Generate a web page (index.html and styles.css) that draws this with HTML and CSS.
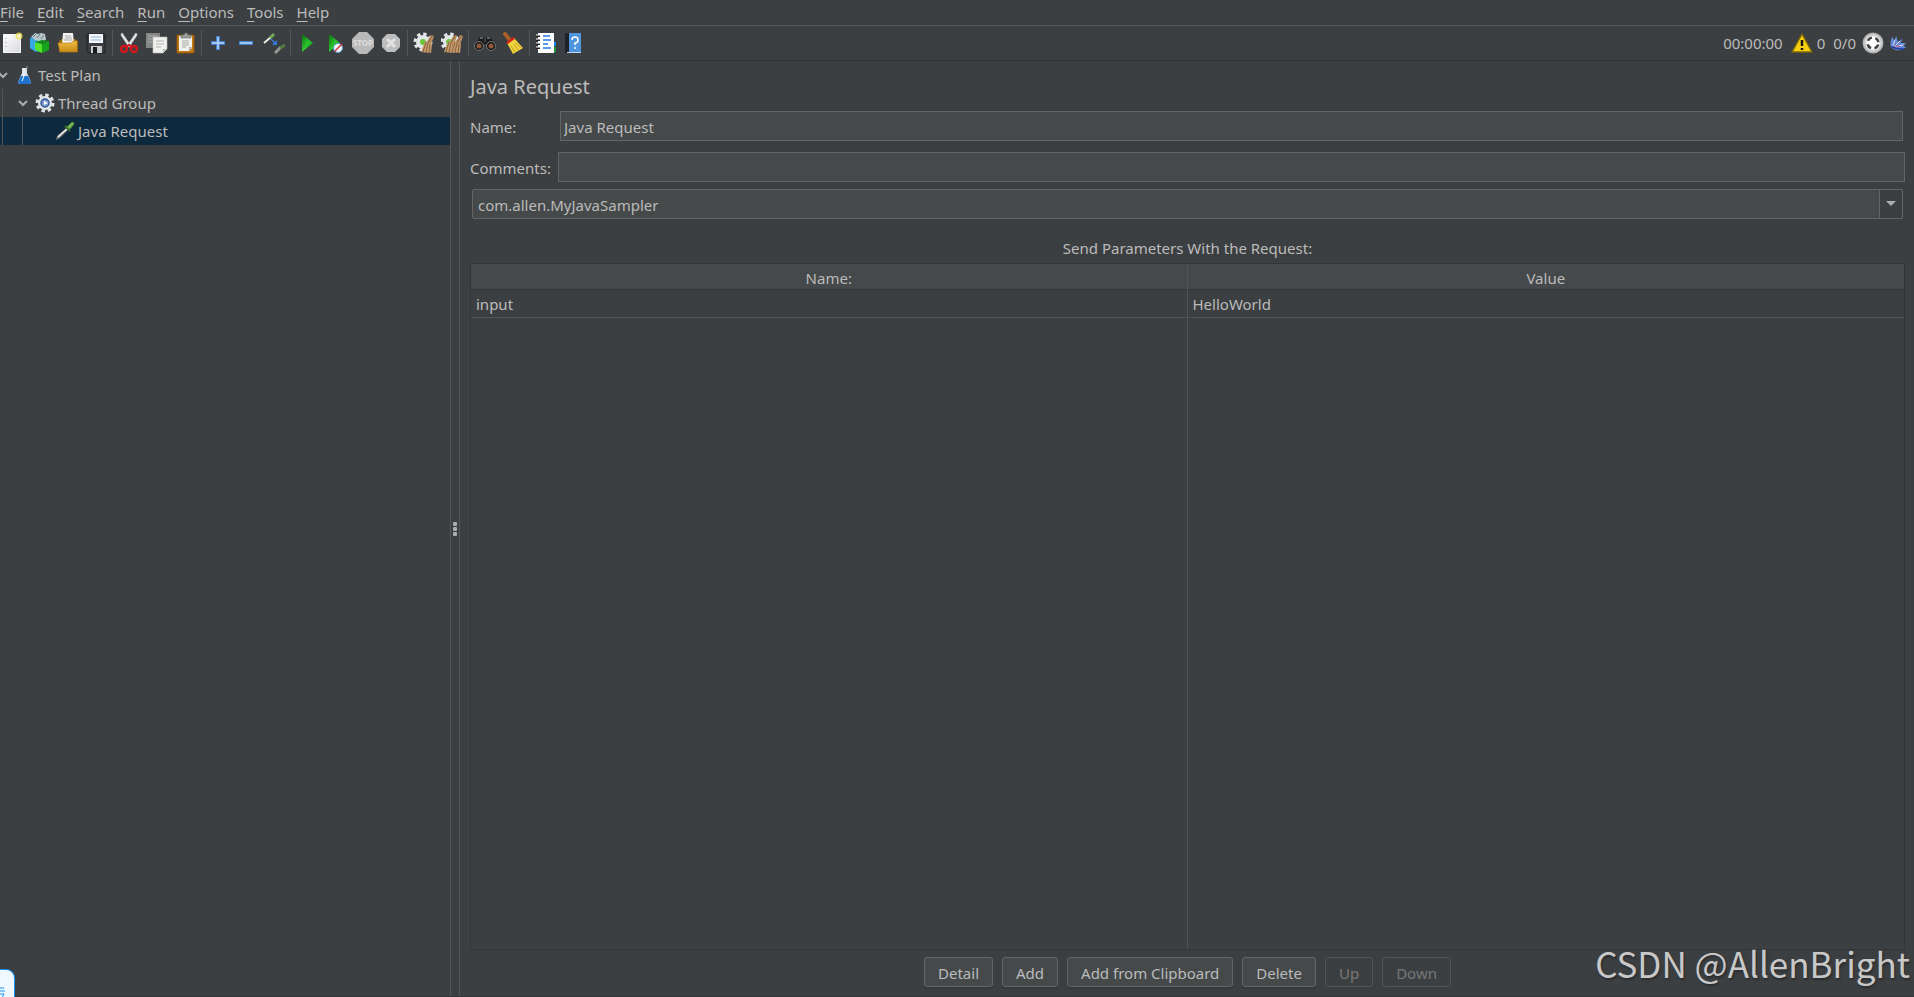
FILE: index.html
```html
<!DOCTYPE html>
<html lang="en">
<head>
  <meta charset="UTF-8">
  <meta name="viewport" content="width=device-width, initial-scale=1">
  <title>Java Request</title>
  <link rel="stylesheet" href="styles.css">
</head>
<body>

<svg class="defs" aria-hidden="true">
  <defs>
    <linearGradient id="green" x1="0" y1="0" x2="1" y2="1">
      <stop offset="0" stop-color="#0b6b0b"/>
      <stop offset="0.5" stop-color="#2cc42c"/>
      <stop offset="1" stop-color="#0a8a0a"/>
    </linearGradient>
    <linearGradient id="gold" x1="0" y1="0" x2="0" y2="1">
      <stop offset="0" stop-color="#f0bd4a"/>
      <stop offset="1" stop-color="#c68a14"/>
    </linearGradient>
    <linearGradient id="paper" x1="0" y1="0" x2="1" y2="1">
      <stop offset="0" stop-color="#ffffff"/>
      <stop offset="1" stop-color="#d9d9dd"/>
    </linearGradient>
    <radialGradient id="ball">
      <stop offset="0.5" stop-color="#ffffff"/>
      <stop offset="1" stop-color="#a5a5a5"/>
    </radialGradient>
    <g id="gear">
      <circle cx="11" cy="11" r="7" fill="#e4e7ea"/>
      <circle cx="11" cy="11" r="8" fill="none" stroke="#e4e7ea" stroke-width="3" stroke-dasharray="3.4 2.88"/>
    </g>
    <g id="pipette">
      <path d="M2 20l1-4 9-8 2 2-8 8z" fill="#777c78"/>
      <path d="M4 17l9-8" stroke="#f4f4f4" stroke-width="1.5"/>
      <path d="M11 6l5 5" stroke="#3d7030" stroke-width="2"/>
      <path d="M13 7l4-4q3-2 3 1l-4 5z" fill="#79b65a" stroke="#4d8a38"/>
    </g>
    <g id="broom">
      <path d="M17 3l-5 8 5 2 3-9z" fill="#b98d63"/>
      <path d="M11 9L7 20l10 1 1-9z" fill="#c49a70"/>
      <path d="M12 10L9 20M14 11l-2 9M16 12l-1 9M18 4l-4 7" stroke="#8b6238"/>
    </g>
  </defs>
</svg>

<nav class="menubar">
  <a href="#"><u>F</u>ile</a>
  <a href="#"><u>E</u>dit</a>
  <a href="#"><u>S</u>earch</a>
  <a href="#"><u>R</u>un</a>
  <a href="#"><u>O</u>ptions</a>
  <a href="#"><u>T</u>ools</a>
  <a href="#"><u>H</u>elp</a>
</nav>

<div class="toolbar">
  <button aria-label="New">
    <svg viewBox="0 0 22 22">
      <rect x="2.5" y="2.5" width="17" height="18" fill="url(#paper)" stroke="#f5f5f5"/>
      <path d="M5 6v1M5 10v1M5 14v1" stroke="#999"/>
      <circle cx="18" cy="4" r="3.5" fill="#f2e45c" opacity="0.8"/>
      <circle cx="18" cy="4" r="1.5" fill="#fffde0"/>
    </svg>
  </button>
  <button aria-label="Templates">
    <svg viewBox="0 0 22 22">
      <path d="M1 6l6-2 5 3v12l-5 1-6-4z" fill="#1687c9"/>
      <path d="M1 6l6 2v12l-6-4z" fill="#35a8e6"/>
      <path d="M2 5l4-4 3 1 3-1 4 1 1 6-5 2-6-2z" fill="#b7c8cb"/>
      <path d="M4 5l3-3M8 6l3-4M12 7l3-4" stroke="#65797e"/>
      <path d="M6 10l7 2v9l-7-3z" fill="#57df2d"/>
      <path d="M13 12l7-3v9l-7 3z" fill="#17a41c"/>
      <path d="M6 10l7-2 7 1-7 3z" fill="#138b1a"/>
    </svg>
  </button>
  <button aria-label="Open">
    <svg viewBox="0 0 22 22">
      <path d="M2 9l3-2h13l3 2v11H2z" fill="#9a6a10"/>
      <path d="M6 1h10l1 11H5z" fill="#f2f2f2"/>
      <path d="M8 4h6M8 6h7M7 8h8" stroke="#aaa"/>
      <path d="M1 11h13l2-2h4v11H3z" fill="url(#gold)" stroke="#b57c10" stroke-width="0.6"/>
    </svg>
  </button>
  <button aria-label="Save">
    <svg viewBox="0 0 22 22">
      <path d="M2 2h18v19H4l-2-2z" fill="#3b3d42" stroke="#202124"/>
      <path d="M4 2h14v9H4z" fill="#f1f6fb"/>
      <path d="M6 5h10M6 8h10" stroke="#94b5d5"/>
      <path d="M6 14h11v7H6z" fill="#c9cbcf"/>
      <path d="M8 15h4v6H8z" fill="#1b1c1e"/>
    </svg>
  </button>
  <span class="sep"></span>
  <button aria-label="Cut">
    <svg viewBox="0 0 22 22">
      <path d="M4 1l9 13-2 1L3 3zM18 1l1 2-8 12-2-1z" fill="#e9eaeb" stroke="#c8c8c8"/>
      <ellipse cx="6" cy="17" rx="3" ry="3" fill="none" stroke="#d3161c" stroke-width="2.4"/>
      <ellipse cx="16" cy="17" rx="3" ry="3" fill="none" stroke="#d3161c" stroke-width="2.4"/>
      <path d="M8 15l3-2 3 2" fill="none" stroke="#d3161c" stroke-width="2"/>
    </svg>
  </button>
  <button aria-label="Copy">
    <svg viewBox="0 0 22 22">
      <path d="M0 1h14v15H0z" fill="#858786"/>
      <path d="M2 4h9M2 7h8M2 10h5" stroke="#a9aaa9"/>
      <path d="M7 5h14v12l-4 4H7z" fill="#f0f0ee" stroke="#bcbcbc" stroke-width="0.6"/>
      <path d="M10 9h8M10 12h8M10 15h5" stroke="#b2b2b2"/>
      <path d="M21 17h-4v4z" fill="#bbb"/>
    </svg>
  </button>
  <button aria-label="Paste">
    <svg viewBox="0 0 22 22">
      <rect x="3" y="3" width="17" height="18" rx="1" fill="#c07a13" stroke="#905409"/>
      <path d="M5 4h13v12l-3 3H5z" fill="#f0f0ee"/>
      <path d="M8 9h7M8 11h7M8 13h7M8 15h4" stroke="#aaa"/>
      <path d="M7 3h3l1-2h2l1 2h3v3H7z" fill="#9b9f9b" stroke="#60645f" stroke-width="0.6"/>
      <path d="M18 15h-3v4z" fill="#aaa"/>
    </svg>
  </button>
  <span class="sep"></span>
  <button aria-label="Expand all">
    <svg viewBox="0 0 22 22"><path d="M11 4v14M4 11h14" stroke="#447fc8" stroke-width="4"/><path d="M11 5v12M5 11h12" stroke="#b9dcff" stroke-width="1.5"/></svg>
  </button>
  <button aria-label="Collapse all">
    <svg viewBox="0 0 22 22"><path d="M4 11h14" stroke="#447fc8" stroke-width="4"/><path d="M5 11h12" stroke="#b9dcff" stroke-width="1.5"/></svg>
  </button>
  <button aria-label="Toggle">
    <svg viewBox="0 0 22 22">
      <path d="M1 11l7-6" stroke="#eee" stroke-width="2"/>
      <path d="M7 6l4-4" stroke="#75aa58" stroke-width="3"/>
      <path d="M12 21l6-6" stroke="#929992" stroke-width="3"/>
      <path d="M17 16l5-3" stroke="#547c40" stroke-width="3"/>
      <path d="M8 7l5 5" stroke="#347be0" stroke-width="1.5"/>
      <path d="M14 8v5H9z" fill="#347be0"/>
    </svg>
  </button>
  <span class="sep"></span>
  <button aria-label="Start">
    <svg viewBox="0 0 22 22"><path d="M6 2l11 9-11 9z" fill="url(#green)"/></svg>
  </button>
  <button aria-label="Start no pauses">
    <svg viewBox="0 0 22 22">
      <path d="M5 2l11 9-11 9z" fill="url(#green)"/>
      <circle cx="14" cy="16" r="4.5" fill="#edf5ff" stroke="#5f9bd5"/>
      <path d="M11 19l7-7" stroke="#de3030" stroke-width="1.5"/>
    </svg>
  </button>
  <button aria-label="Stop">
    <svg viewBox="0 0 22 22">
      <path d="M7 0h8l7 7v8l-7 7H7l-7-7V7z" fill="#b9b9b9"/>
      <text x="11" y="14" class="stop-text">STOP</text>
    </svg>
  </button>
  <button aria-label="Shutdown">
    <svg viewBox="0 0 22 22">
      <path d="M7 2h8l5 5v8l-5 5H7l-5-5V7z" fill="#bebebe"/>
      <path d="M7 7l8 8M15 7l-8 8" stroke="#e2e2e2" stroke-width="3"/>
    </svg>
  </button>
  <span class="sep"></span>
  <button aria-label="Clear">
    <svg viewBox="0 0 22 22"><use href="#gear" transform="translate(-1 -1)"/><circle cx="10" cy="10" r="3" fill="#68c83b"/><use href="#broom" transform="translate(1 0)"/></svg>
  </button>
  <button aria-label="Clear all">
    <svg viewBox="0 0 22 22"><use href="#gear" transform="translate(-2 -1)"/><circle cx="8" cy="10" r="3" fill="#68c83b"/><use href="#broom" transform="translate(-4 0)"/><use href="#broom" transform="translate(2 0)"/></svg>
  </button>
  <span class="sep"></span>
  <button aria-label="Search">
    <svg viewBox="0 0 22 22">
      <path d="M2 11l4-6h4v5h2V5h4l4 6v5h-7v-4H9v4H2z" fill="#1a1b1c"/>
      <circle cx="5" cy="14" r="4.5" fill="#181818" stroke="#777"/>
      <circle cx="17" cy="14" r="4.5" fill="#181818" stroke="#777"/>
      <circle cx="5" cy="14" r="2.5" fill="#93583c"/>
      <circle cx="17" cy="14" r="2.5" fill="#93583c"/>
      <path d="M6 6h3M13 6h3" stroke="#aaa"/>
    </svg>
  </button>
  <button aria-label="Reset search">
    <svg viewBox="0 0 22 22">
      <path d="M3 2l4 5" stroke="#a65e28" stroke-width="4" stroke-linecap="round"/>
      <path d="M5 11l7-5 9 10-10 6z" fill="#efd13d"/>
      <path d="M9 14l4 6M12 12l4 6M14 11l5 5" stroke="#c9a41f"/>
      <path d="M5 11l7-5" stroke="#d3201b" stroke-width="2.5"/>
    </svg>
  </button>
  <span class="sep"></span>
  <button aria-label="Function helper">
    <svg viewBox="0 0 22 22">
      <path d="M17 10h4v4h-4z" fill="#1685e5"/><path d="M17 15h4v5h-4z" fill="#1b9c33"/>
      <path d="M3 1h16v20H3z" fill="#fff"/>
      <path d="M8 4h7M8 8h8M8 12h5M8 16h8" stroke="#207de4" stroke-width="1.5"/>
      <path d="M1 4h4M1 8h4M1 12h4M1 16h4" stroke="#222" stroke-width="2"/>
      <path d="M1 3h4M1 7h4M1 11h4M1 15h4" stroke="#fff"/>
    </svg>
  </button>
  <button aria-label="Help">
    <svg viewBox="0 0 22 22">
      <path d="M3 1h15v19H3z" fill="#5095e0"/>
      <path d="M2 1h4v20H2z" fill="#1d2128"/>
      <path d="M4 20h14v1H4z" fill="#bcd6ef"/>
      <path d="M9 8q0-3 3-3t3 3-3 3v2" fill="none" stroke="#fff" stroke-width="1.5"/>
      <circle cx="12" cy="16" r="1" fill="#fff"/>
    </svg>
  </button>

  <div class="status">
    <span class="time">00:00:00</span>
    <svg viewBox="0 0 22 22">
      <path d="M11 2l10 18H1z" fill="#f6cf12" stroke="#79670c" stroke-width="1.5" stroke-linejoin="round"/>
      <path d="M11 8v6M11 16v2" stroke="#171717" stroke-width="2.5"/>
    </svg>
    <span class="errors">0</span>
    <span class="threads">0/0</span>
    <svg viewBox="0 0 22 22">
      <circle cx="11" cy="11" r="10.5" fill="url(#ball)"/>
      <circle cx="11" cy="11" r="5.5" fill="none" stroke="#414141" stroke-width="2.5" stroke-dasharray="5 3.64" stroke-dashoffset="-1.8"/>
    </svg>
    <svg class="feather" viewBox="0 0 22 22">
      <path d="M3 15Q2 8 5 4l2 5 2-6 2 7 5-4-2 5 6 0-3 3 3 2-7 3q-7 0-10-4z" fill="#6689d5"/>
      <path d="M5 15l3-8M6 16l7-7M6 16l11-3" stroke="#dce7ff"/>
      <path d="M4 15l5 2 9 1" fill="none" stroke="#243f9e" stroke-width="2"/>
      <path d="M7 14l6 1" stroke="#cc4968"/>
    </svg>
  </div>
</div>

<main class="workspace">
  <aside class="tree">
    <div class="row plan">
      <svg class="arrow" viewBox="0 0 10 10"><path d="M1 3l4 4 4-4"/></svg>
      <svg viewBox="0 0 20 20">
        <path d="M7 3h5v5l4 9q0 2-2 2H5q-2 0-2-2l4-9z" fill="#d5dfe7"/>
        <path d="M6 11h7l3 6q0 2-2 2H5q-2 0-2-2z" fill="#1e73cf"/>
        <path d="M9 4v7l-2 5" fill="none" stroke="#fff"/>
        <path d="M12 4V1" stroke="#8d9498"/>
      </svg>
      <span>Test Plan</span>
    </div>
    <div class="row group">
      <svg class="arrow" viewBox="0 0 10 10"><path d="M1 3l4 4 4-4"/></svg>
      <svg viewBox="1 1 20 20"><use href="#gear"/><circle cx="11" cy="11" r="4" fill="#7d9dd0" stroke="#355a98" stroke-width="1.5"/><path d="M10 9l4 2-4 2z" fill="#fff"/></svg>
      <span>Thread Group</span>
    </div>
    <div class="row request selected">
      <svg viewBox="1 1 20 20"><use href="#pipette"/></svg>
      <span>Java Request</span>
    </div>
  </aside>

  <div class="divider"><i></i><i></i><i></i></div>

  <section class="editor">
    <h1>Java Request</h1>
    <div class="field name-field">
      <label for="name">Name:</label>
      <input type="text" id="name" value="Java Request">
    </div>
    <div class="field">
      <label for="comments">Comments:</label>
      <input type="text" id="comments">
    </div>
    <div class="combo">
      <select id="classname" aria-label="Classname">
        <option>com.allen.MyJavaSampler</option>
      </select>
      <span class="combo-arrow"><svg viewBox="0 0 10 6"><path d="M0 0h10L5 5z"/></svg></span>
    </div>

    <h2>Send Parameters With the Request:</h2>
    <div class="table-box">
      <table>
        <thead>
          <tr><th>Name:</th><th>Value</th></tr>
        </thead>
        <tbody>
          <tr><td>input</td><td>HelloWorld</td></tr>
          <tr class="filler"><td></td><td></td></tr>
        </tbody>
      </table>
    </div>

    <div class="buttons">
      <button>Detail</button>
      <button>Add</button>
      <button>Add from Clipboard</button>
      <button>Delete</button>
      <button disabled>Up</button>
      <button disabled>Down</button>
    </div>
  </section>
</main>

<div class="side-badge">
  <svg viewBox="0 0 14 28"><path d="M0 18h4M0 21h5M0 24h4l-2 4" fill="none" stroke="#1492f2"/></svg>
</div>
<div class="watermark">CSDN @AllenBright</div>

</body>
</html>
```
FILE: styles.css
```css
* {
  box-sizing: border-box;
}

body {
  display: flex;
  flex-direction: column;
  height: 100vh;
  margin: 0;
  overflow: hidden;
  background-color: #3c3f41;
  color: #bbbbbb;
  font-family: "Noto Sans", sans-serif;
  font-size: 15px;
  line-height: 20px;
  border-bottom: 1px solid #333638;
}

button, input, select {
  font: inherit;
  color: inherit;
}

.defs {
  position: absolute;
  width: 0;
  height: 0;
}

/* menu */
.menubar {
  display: flex;
  gap: 13px;
  height: 26px;
  padding-top: 2px;
  border-bottom: 1px solid #555555;
}

.menubar a {
  color: inherit;
  text-decoration: none;
}

.menubar u {
  text-underline-offset: 3px;
}

/* toolbar */
.toolbar {
  display: flex;
  align-items: center;
  height: 35px;
  padding-bottom: 1px;
  border-bottom: 1px solid #323232;
}

.toolbar button {
  width: 28px;
  height: 28px;
  padding: 3px;
  background: none;
  border: none;
}

.toolbar button:first-child {
  width: 26px;
  padding-left: 1px;
}

.toolbar svg {
  display: block;
  width: 22px;
  height: 22px;
}

.sep {
  width: 1px;
  height: 26px;
  margin: 0 2px;
  background-color: #555555;
}

.stop-text {
  font-size: 8px;
  font-weight: bold;
  text-anchor: middle;
  fill: #dddddd;
}

.status {
  display: flex;
  align-items: center;
  margin-left: auto;
  padding-right: 6px;
}

.time {
  margin-right: 8px;
}

.errors {
  margin: 0 8px 0 4px;
}

.threads {
  margin-right: 6px;
}

.status .feather {
  width: 20px;
  margin-left: 4px;
}

/* tree and editor */
.workspace {
  display: flex;
  flex: 1;
  min-height: 0;
}

.tree {
  flex: 0 0 450px;
}

.row {
  display: flex;
  align-items: center;
  height: 28px;
}

.row svg {
  width: 20px;
  height: 20px;
  margin-right: 3px;
}

.row .arrow {
  width: 10px;
  height: 10px;
  margin-right: 7px;
  fill: none;
  stroke: #adadad;
  stroke-width: 2;
}

.plan {
  margin-left: -2px;
}

.group {
  padding-left: 15px;
  border-left: 1px solid #555555;
  margin-left: 2px;
}

.request {
  padding-left: 55px;
}

.selected {
  background:
    linear-gradient(#555555, #555555) 2px 0 / 1px 100% no-repeat,
    linear-gradient(#555555, #555555) 22px 0 / 1px 100% no-repeat,
    #0d293e;
}

.divider {
  display: flex;
  flex: 0 0 10px;
  flex-direction: column;
  align-items: center;
  justify-content: center;
  gap: 1px;
  border-left: 1px solid #555555;
  border-right: 1px solid #555555;
}

.divider i {
  width: 4px;
  height: 4px;
  border-radius: 1px;
  background-color: #adadad;
}

.editor {
  display: flex;
  flex: 1;
  flex-direction: column;
  min-width: 0;
  padding: 12px 9px 9px 10px;
}

h1 {
  margin: 0 0 10px;
  font-size: 20px;
  font-weight: normal;
  line-height: 28px;
}

.field {
  display: flex;
  align-items: center;
  margin-bottom: 7px;
}

.field label {
  flex: 0 0 88px;
  padding-top: 2px;
}

.field input {
  flex: 1;
  height: 30px;
  padding: 3px 3px 1px;
  background-color: #45494a;
  border: 1px solid #646464;
}

.name-field {
  margin-bottom: 11px;
  padding-right: 2px;
}

.name-field label {
  flex-basis: 90px;
}

.combo {
  display: grid;
  margin: 0 2px;
}

.combo select {
  grid-area: 1 / 1;
  height: 30px;
  padding: 3px 5px 1px;
  appearance: none;
  background-color: #45494a;
  border: 1px solid #646464;
  border-radius: 2px;
}

.combo-arrow {
  display: flex;
  grid-area: 1 / 1;
  align-items: center;
  justify-content: center;
  justify-self: end;
  width: 24px;
  border: 1px solid #646464;
  border-radius: 0 2px 2px 0;
  background-color: #3c3f41;
  pointer-events: none;
}

.combo-arrow svg {
  width: 10px;
  height: 6px;
  fill: #adadad;
}

h2 {
  margin: 19px 0 5px;
  font-size: 15px;
  font-weight: normal;
  line-height: 20px;
  text-align: center;
}

.table-box {
  flex: 1;
  min-height: 0;
  border: 1px solid #323537;
}

table {
  width: 100%;
  height: 100%;
  table-layout: fixed;
  border-collapse: separate;
  border-spacing: 0;
}

th {
  height: 26px;
  padding: 2px 4px 0;
  font-weight: normal;
  background-color: #45494b;
  border-bottom: 1px solid #323537;
}

td {
  height: 28px;
  padding: 0 5px;
  border-bottom: 1px solid #515456;
}

th:first-child, td:first-child {
  border-right: 1px solid #515456;
}

.filler td {
  height: auto;
  border-bottom: none;
}

.buttons {
  display: flex;
  justify-content: center;
  gap: 9px;
  padding-top: 7px;
}

.buttons button {
  height: 30px;
  padding: 3px 13px 1px;
  background-color: #45494a;
  border: 1px solid #646464;
  border-radius: 3px;
  box-shadow: 0 2px 0 #36393a;
}

.buttons button:disabled {
  color: #777777;
  background: none;
  border-color: #515456;
  box-shadow: none;
}

.side-badge {
  position: absolute;
  left: 0;
  bottom: 0;
  width: 15px;
  height: 28px;
  background-color: #f0f8ff;
  border: solid #1492f2;
  border-width: 1px 1px 0 0;
  border-radius: 0 9px 0 0;
}

.side-badge svg {
  display: block;
}

.watermark {
  position: absolute;
  right: 4px;
  bottom: 12px;
  font-family: "Noto Sans CJK SC", sans-serif;
  font-size: 35px;
  line-height: 44px;
  color: #c8c8c8;
  text-shadow: 1px 2px 2px #2a2c2e;
  pointer-events: none;
}
```
